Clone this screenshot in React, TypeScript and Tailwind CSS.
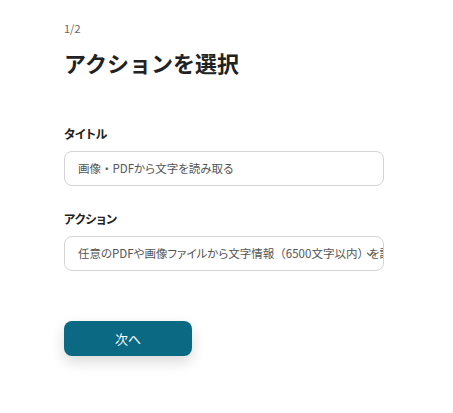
const Punct = ({ children }: { children: string }) => (
  <span className="[font-feature-settings:normal]">{children}</span>
);

export default function App() {
  return (
    <div
      className="min-h-screen bg-white px-16 pt-[20px] text-[#333]"
      style={{ fontFamily: '"Noto Sans CJK JP", "Noto Sans", sans-serif' }}
    >
      <div className="w-[320px]">
        <p className="text-[11px] leading-4 text-[#666]">1/2</p>
        <h1 className="mt-[10px] text-[22px] font-bold leading-8 text-[#222]">アクションを選択</h1>

        <div className="mt-[46px]">
          <label className="block text-[12px] font-bold leading-5 text-[#222] [font-feature-settings:'palt']">タイトル</label>
          <div className="mt-[7px] flex h-[35px] items-center rounded-lg border border-[#d4d4d4] px-[13px] text-[11.5px] text-[#555] [font-feature-settings:'palt']">
            <span>
              画像<Punct>・</Punct>PDFから文字を読み取る
            </span>
          </div>
        </div>

        <div className="mt-[23px]">
          <label className="block text-[12px] font-bold leading-5 text-[#222] [font-feature-settings:'palt']">アクション</label>
          <div className="relative mt-[7px] flex h-[35px] items-center overflow-hidden rounded-lg border border-[#d4d4d4] pl-[13px] text-[11.5px] text-[#555] [font-feature-settings:'palt']">
            <span className="whitespace-nowrap">
              任意のPDFや画像ファイルから文字情報<Punct>（</Punct>6500文字以内<Punct>）</Punct>を読み取る
            </span>
            <svg
              className="absolute right-[9px] top-1/2 -translate-y-1/2"
              width="8"
              height="8"
              viewBox="0 0 10 10"
              fill="none"
              stroke="#666"
              strokeWidth="1.6"
            >
              <path d="M1.5 3.5 L5 7 L8.5 3.5" />
            </svg>
          </div>
        </div>

        <button className="mt-[50px] h-[35px] w-[128px] rounded-lg bg-[#0b6983] text-[13px] text-white shadow-[0_6px_14px_rgba(0,0,0,0.15)]">
          次へ
        </button>
      </div>
    </div>
  );
}
